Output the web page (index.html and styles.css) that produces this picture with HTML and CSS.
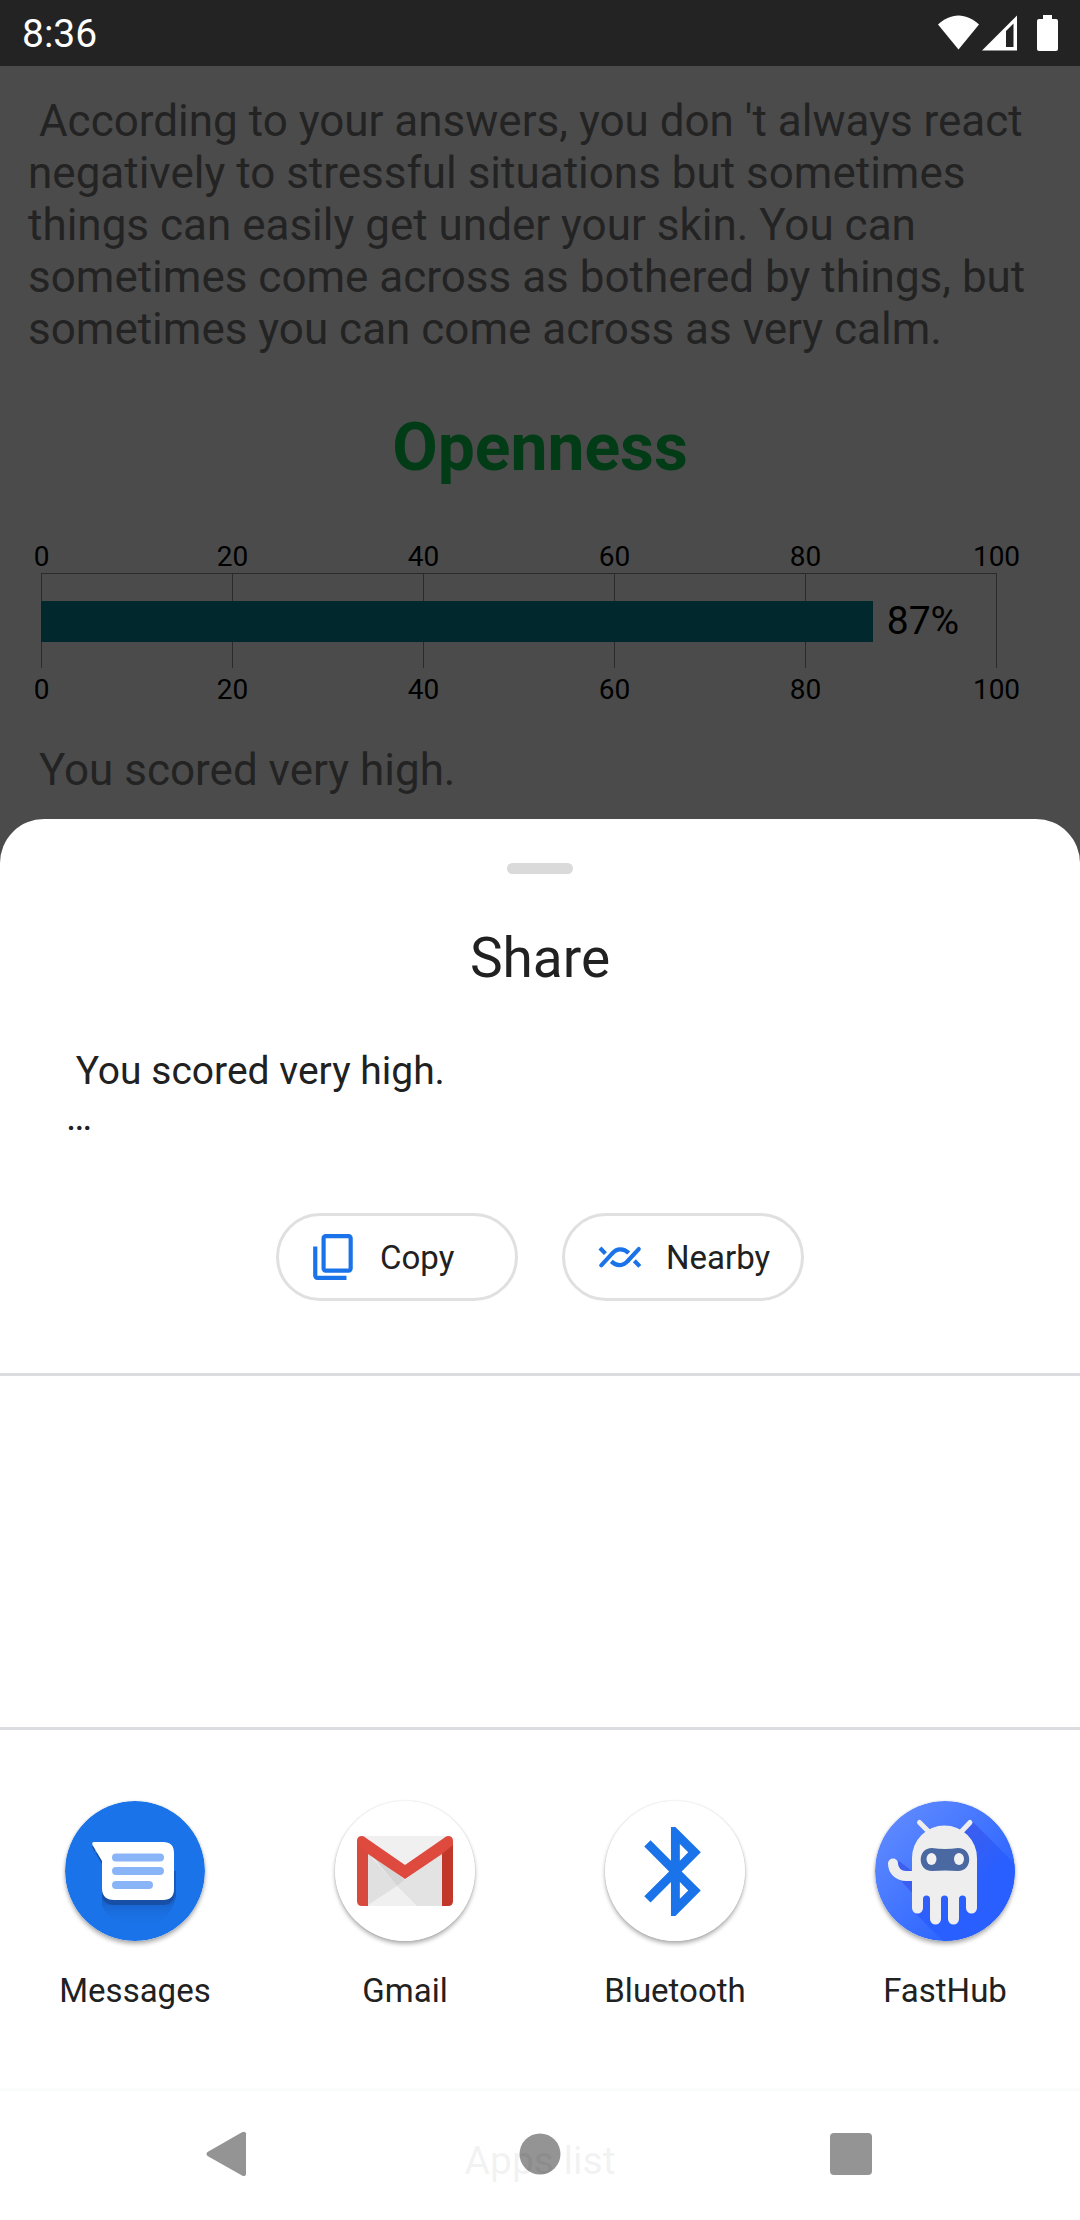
FILE: index.html
```html
<!DOCTYPE html>
<html lang="en">
<head>
<meta charset="utf-8">
<meta name="viewport" content="width=device-width, initial-scale=1">
<title>Share</title>
<link rel="stylesheet" href="styles.css">
</head>
<body>
<header class="status">
  <time class="clock">8:36</time>
  <div class="status-icons">
    <svg width="41" height="36" viewBox="0 0 41 36" aria-label="Wi-Fi"><path fill="#fff" d="M20.500 34.500 0 9.500C6 4 13 .5 20.500 .5S35 4 41 9.500z"/></svg>
    <svg class="signal" width="35" height="36" viewBox="0 0 35 36" aria-label="Signal"><path fill="#fff" fill-rule="evenodd" d="M0 35.500 35 .5V35.500zM24 16V32H31.500V8.500z"/></svg>
    <svg class="battery" width="21" height="36" viewBox="0 0 21 36" aria-label="Battery"><path fill="#fff" d="M6 0h9v4H19a2 2 0 0 1 2 2v28a2 2 0 0 1-2 2H2a2 2 0 0 1-2-2V6a2 2 0 0 1 2-2h4z"/></svg>
  </div>
</header>

<main class="results">
  <p class="summary">&nbsp;According to your answers, you don 't always react negatively to stressful situations but sometimes things can easily get under your skin. You can sometimes come across as bothered by things, but sometimes you can come across as very calm.</p>
  <h2 class="trait">Openness</h2>
  <div class="chart">
    <div class="axis"><span>0</span><span>20</span><span>40</span><span>60</span><span>80</span><span>100</span></div>
    <div class="plot">
      <div class="gridlines"><i></i><i></i><i></i><i></i><i></i><i></i></div>
      <div class="series"><div class="bar" style="width:87%"></div><span class="value">87%</span></div>
    </div>
    <div class="axis axis-bottom"><span>0</span><span>20</span><span>40</span><span>60</span><span>80</span><span>100</span></div>
  </div>
  <p class="score">&nbsp;You scored very high.</p>
</main>

<section class="sheet" aria-labelledby="share-title">
  <div class="handle"></div>
  <h1 class="title" id="share-title">Share</h1>
  <p class="preview">&nbsp;You scored very high.<br>…</p>
  <div class="actions">
    <button class="chip" type="button">
      <svg width="50" height="50" viewBox="0 0 24 24" fill="none" stroke="#1a73e8" stroke-width="2"><rect x="7" y="2" width="13" height="16.500" rx="1"/><path d="M3 7v14a1 1 0 0 0 1 1h14"/></svg>
      <span>Copy</span>
    </button>
    <button class="chip" type="button">
      <svg width="50" height="50" viewBox="0 0 24 24" fill="none" stroke="#1a73e8" stroke-width="2"><path stroke-linecap="round" d="M3 16 8.200 10.400M21 8.200 15.800 13.800"/><path d="M8.200 10.400C10.400 7.700 13.700 7.700 16.200 10.100M15.800 13.800C13.600 16.500 10.300 16.500 7.800 14.100M2.400 7.700 5 10.400M18.900 13.800 21.500 16.500"/></svg>
      <span>Nearby</span>
    </button>
  </div>
  <div class="direct"></div>
  <div class="apps">
    <button class="app" type="button">
      <svg class="app-icon" viewBox="0 0 140 140">
        <defs><linearGradient id="msg-shade" gradientUnits="userSpaceOnUse" x1="0" y1="95" x2="0" y2="126"><stop offset="0" stop-color="#185abc"/><stop offset="1" stop-color="#1a73e8" stop-opacity="0"/></linearGradient></defs>
        <circle cx="70" cy="70" r="70" fill="#1a73e8"/>
        <path fill="url(#msg-shade)" d="M37 70V104q6 18 33 22 34 0 41-30V70z"/>
        <path fill="#174ea6" d="M27 46 37 63V92q0 12 12 12H98q11 0 11-12V52H30V42z"/>
        <path fill="#fff" d="M29 41H98q11 0 11 11V88q0 11-11 11H49q-12 0-12-12V60L27.500 44q-1-3 1.500-3z"/>
        <path stroke="#8ab4f8" stroke-width="8" stroke-linecap="round" d="M51 56.500H95M51 70H95M51 84H84"/>
      </svg>
      <span>Messages</span>
    </button>
    <button class="app" type="button">
      <svg class="app-icon" viewBox="0 0 140 140">
        <circle cx="70" cy="70" r="70" fill="#fff"/>
        <path fill="#f0f0f0" d="M27 35H113V105H27z"/>
        <path fill="#e0e0e0" d="M33 52 62 85 33 104z"/>
        <path fill="#d5d5d5" d="M33 50 70 79 62 85z"/>
        <path fill="#e3e3e3" d="M62 85 107 50V105H82z"/>
        <path fill="#d84a3d" d="M22 42 33 50V105H27q-5 0-5-5z"/>
        <path fill="#c1372a" d="M118 42 107 50V105H113q5 0 5-5z"/>
        <path fill="#de4a3e" d="M22 40q0-5 5-5 2 0 4 2L70 64 109 37q2-2 4-2 5 0 5 5V44L107 53 70 78 33 53 22 44z"/>
      </svg>
      <span>Gmail</span>
    </button>
    <button class="app" type="button">
      <svg class="app-icon" viewBox="0 0 140 140">
        <circle cx="70" cy="70" r="70" fill="#fff"/>
        <path fill="#1a73e8" transform="translate(17 17) scale(4.450)" d="M17.710 7.710 12 2h-1v7.590L6.410 5 5 6.410 10.590 12 5 17.590 6.410 19 11 14.410V22h1l5.710-5.710-4.300-4.290zM13 5.830l1.880 1.880L13 9.590zm1.880 10.460L13 18.170v-3.760z"/>
      </svg>
      <span>Bluetooth</span>
    </button>
    <button class="app" type="button">
      <svg class="app-icon" viewBox="0 0 140 140">
        <defs>
          <linearGradient id="hub" x1=".1" y1=".1" x2=".8" y2=".8"><stop offset="0" stop-color="#5f8aff"/><stop offset="1" stop-color="#2962ff"/></linearGradient>
          <linearGradient id="hub-shade" gradientUnits="userSpaceOnUse" x1="60" y1="50" x2="95" y2="90"><stop offset="0" stop-color="#3d5eee"/><stop offset="1" stop-color="#295fff"/></linearGradient>
          <clipPath id="hub-clip"><circle cx="70" cy="70" r="70"/></clipPath>
        </defs>
        <circle cx="70" cy="70" r="70" fill="url(#hub)"/>
        <g clip-path="url(#hub-clip)"><path fill="url(#hub-shade)" d="M97 20 150 73V150H78L40 112V95L15 68 24 60 50 80z"/></g>
        <path fill="#eee" d="M37 57a32.500 32.500 0 0 1 65 0V107a5.500 5.500 0 0 1-11 0V98a3.500 3.500 0 0 0-7 0V118a5.500 5.500 0 0 1-11 0V98a3.500 3.500 0 0 0-7 0V118a5.500 5.500 0 0 1-11 0V98a3.500 3.500 0 0 0-7 0V107a5.500 5.500 0 0 1-11 0z"/>
        <path fill="none" stroke="#eee" stroke-width="10" stroke-linecap="round" d="M18 62.500C18 70 24 75 31 75H38"/>
        <path stroke="#eee" stroke-width="5" stroke-linecap="round" d="M44.500 21.500 54 31M95 21.500 86 31"/>
        <path fill="#4a69a2" d="M57 47Q70 49 83 47C98 47 98 70 83 70Q70 69 57 70C42 70 42 47 57 47z"/>
        <ellipse cx="56.500" cy="58" rx="5" ry="6" fill="#f1f1f1"/><ellipse cx="84" cy="58" rx="5" ry="6" fill="#f1f1f1"/>
      </svg>
      <span>FastHub</span>
    </button>
  </div>
  <h2 class="list-title">Apps list</h2>
</section>

<nav class="navbar">
  <button type="button" aria-label="Back"><svg width="46" height="46" viewBox="0 0 46 46"><path d="M1.500 21 36 1.200q3-1.500 4 1V43.500q-1 2.500-4 1L1.500 25q-2-2 0-4z"/></svg></button>
  <button type="button" aria-label="Home"><svg width="46" height="46" viewBox="0 0 46 46"><circle cx="23" cy="23" r="20.500"/></svg></button>
  <button type="button" aria-label="Overview"><svg width="46" height="46" viewBox="0 0 46 46"><rect x="2" y="2" width="42" height="42" rx="4"/></svg></button>
</nav>
</body>
</html>
```
FILE: styles.css
```css
* {
  box-sizing: border-box;
}

body {
  position: relative;
  display: flex;
  flex-direction: column;
  min-height: 100vh;
  margin: 0;
  background: #4b4b4b;
  color: #212121;
  font-family: Roboto, "Liberation Sans", sans-serif;
}

h1, h2, p {
  margin: 0;
  font-weight: 400;
}

button {
  padding: 0;
  border: 0;
  background: none;
  color: inherit;
  font: inherit;
}

svg {
  display: block;
  flex: none;
}

/* Status bar */
.status {
  display: flex;
  align-items: center;
  justify-content: space-between;
  height: 66px;
  padding: 0 22px;
  background: #232323;
  color: #fff;
}

.clock {
  font-size: 39px;
  line-height: 48px;
  padding-top: 2px;
}

.status-icons {
  display: flex;
}

.signal {
  margin-left: 3px;
}

.battery {
  margin-left: 20px;
}

/* Results page, dimmed behind the sheet */
.results {
  padding: 29px 28px 23px;
  color: #232323;
}

.summary, .score {
  font-size: 44px;
  line-height: 52px;
}

.trait {
  margin: 54px 0;
  color: #023c17;
  font-size: 66px;
  font-weight: 700;
  line-height: 78px;
  text-align: center;
}

.chart {
  margin: 0 55px 38px 13px;
  color: #000;
}

.axis {
  display: flex;
  justify-content: space-between;
  font-size: 28px;
  line-height: 32px;
}

.axis span {
  display: flex;
  justify-content: center;
  width: 1px;
}

.axis-bottom {
  margin-top: 6px;
}

.plot {
  display: grid;
  height: 95px;
  border-top: 1px solid #2a2a2a;
}

.gridlines, .series {
  grid-area: 1 / 1;
}

.gridlines {
  display: flex;
  justify-content: space-between;
}

.gridlines i {
  width: 1px;
  background: #2a2a2a;
}

.series {
  display: flex;
  align-items: center;
  gap: 14px;
}

.bar {
  flex: none;
  height: 41px;
  background: #00282d;
}

.value {
  font-size: 39px;
  line-height: 46px;
}

/* Share sheet */
.sheet {
  flex: 1;
  padding: 44px 0 36px;
  border-radius: 44px 44px 0 0;
  background: #fff;
}

.handle {
  width: 66px;
  height: 11px;
  margin: 0 auto 52px;
  border-radius: 6px;
  background: #dadada;
}

.title {
  font-size: 55px;
  line-height: 64px;
  text-align: center;
}

.preview {
  margin: 58px 66px 73px;
  font-size: 39px;
  line-height: 46px;
}

.actions {
  display: flex;
  justify-content: center;
  gap: 44px;
}

.chip {
  display: flex;
  align-items: center;
  gap: 21px;
  min-width: 242px;
  height: 88px;
  padding: 0 30px;
  border: 3px solid #e0e0e0;
  border-radius: 44px;
  font-size: 33px;
  line-height: 40px;
}

.chip span {
  padding-top: 2px;
}

.direct {
  height: 357px;
  margin-top: 72px;
  border: solid #dadce0;
  border-width: 3px 0;
}

.apps {
  display: grid;
  grid-template-columns: repeat(4, 1fr);
  margin: 71px 0 127px;
}

.app {
  display: flex;
  flex-direction: column;
  align-items: center;
  gap: 30px;
  font-size: 33px;
  line-height: 40px;
}

.app-icon {
  width: 140px;
  height: 140px;
  border-radius: 50%;
  box-shadow: 0 3px 4px rgba(0, 0, 0, .3), 0 0 2px rgba(0, 0, 0, .15);
}

.list-title {
  font-size: 39px;
  line-height: 46px;
  text-align: center;
}

/* Translucent system navigation over the end of the sheet */
.navbar {
  position: absolute;
  right: 0;
  bottom: 0;
  left: 0;
  display: flex;
  align-items: center;
  justify-content: space-between;
  height: 132px;
  padding: 0 206px 3px;
  border-top: 3px solid #fafcfb;
  background: rgba(255, 255, 255, .94);
}

.navbar svg {
  fill-opacity: .42;
}
```
